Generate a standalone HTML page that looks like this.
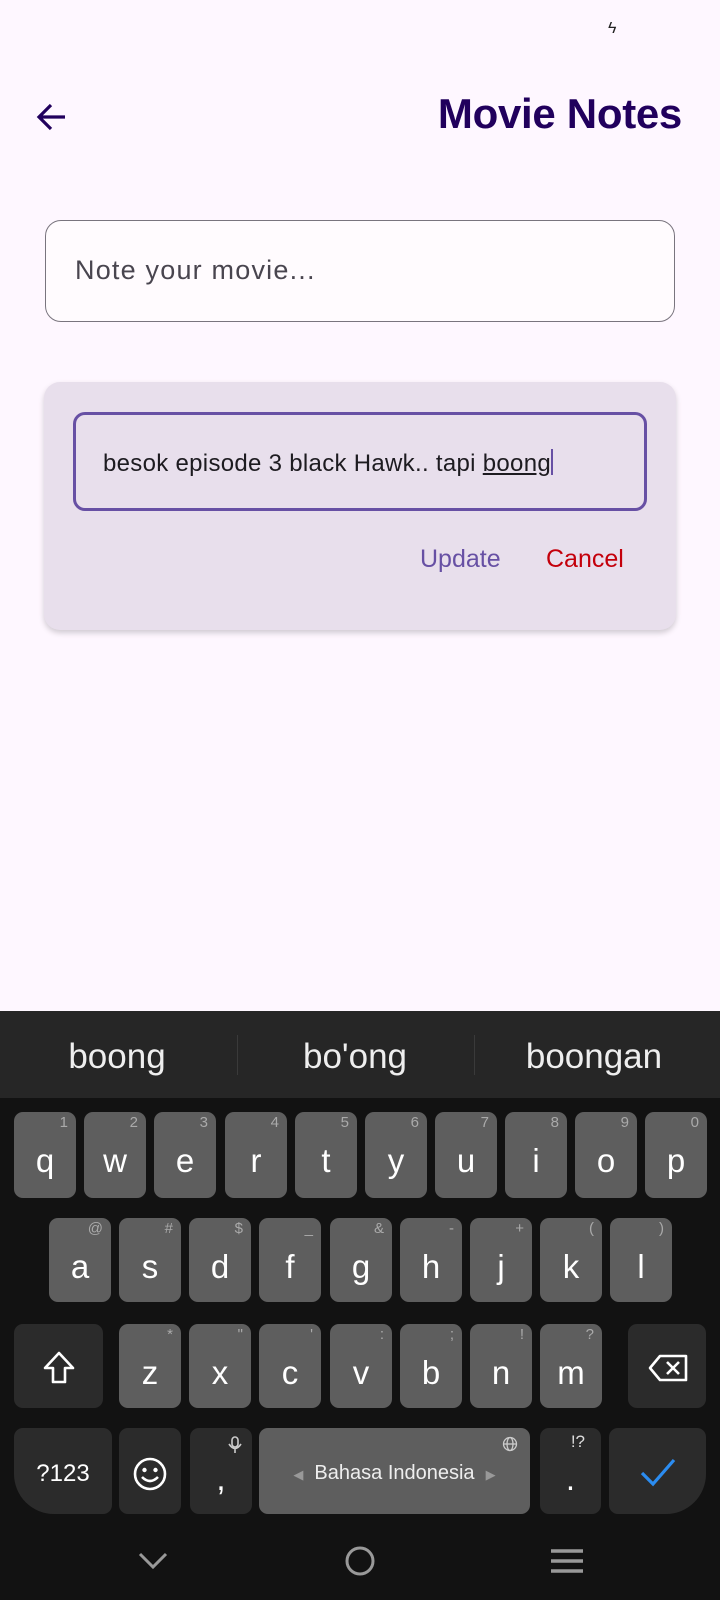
<!DOCTYPE html>
<html><head><meta charset="utf-8"><style>
*{margin:0;padding:0;box-sizing:border-box}
body{width:720px;height:1600px;background:#FEF7FF;font-family:"Liberation Sans",Roboto,sans-serif;position:relative;overflow:hidden}
.a{position:absolute}
.title{right:38px;top:90px;font-size:42px;font-weight:bold;color:#21005D;letter-spacing:-0.3px}
.in1{left:45px;top:220px;width:630px;height:102px;border:1.5px solid #79747E;border-radius:16px;background:#FFFBFE}
.in1 span{position:absolute;left:29px;top:34px;font-size:27px;color:#49454F;letter-spacing:1.2px}
.card{left:44px;top:382px;width:632px;height:248px;background:#E8DFEC;border-radius:16px;box-shadow:0 3px 6px rgba(0,0,0,.18)}
.in2{left:73px;top:412px;width:574px;height:99px;border:3px solid #6750A4;border-radius:12px}
.in2 span{position:absolute;left:27px;top:34px;font-size:24px;color:#1D1B20;letter-spacing:0.3px}
.btn{font-size:25px;top:545px}
.kb{left:0;top:1011px;width:720px;height:589px;background:#121212}
.sug{left:0;top:1011px;width:720px;height:87px;background:#262626}
.sw{font-size:35px;color:#eee;top:1037px;width:200px;text-align:center}
.dv{top:1035px;width:1px;height:40px;background:#3a3a3a}
.k{position:absolute;background:#5E5E5E;border-radius:9px;color:#fff;font-size:33px;text-align:center}
.k .m{position:absolute;left:0;right:0;top:30px}
.k .h{position:absolute;right:8px;top:2px;font-size:15px;color:#aaa}
.d{background:#2B2B2B}
</style></head><body>
<div class="a" style="left:608px;top:20px;color:#222;font-size:16px">ϟ</div>
<svg class="a" style="left:34px;top:101px" width="34" height="32" viewBox="0 0 34 32"><path d="M31 16H5M17 4L5 16l12 12" stroke="#21005D" stroke-width="3.2" fill="none"/></svg>
<div class="a title">Movie Notes</div>
<div class="a in1"><span>Note your movie...</span></div>
<div class="a card"></div>
<div class="a in2"><span>besok episode 3 black Hawk.. tapi <u>boong</u><span style="position:static;display:inline-block;width:2px;height:26px;background:#6750A4;vertical-align:-4px"></span></span></div>
<div class="a btn" style="left:420px;color:#6750A4">Update</div>
<div class="a btn" style="left:546px;color:#C4000B">Cancel</div>
<div class="a kb"></div>
<div class="a sug"></div>
<div class="a sw" style="left:17px">boong</div>
<div class="a sw" style="left:255px">bo'ong</div>
<div class="a sw" style="left:494px">boongan</div>
<div class="a dv" style="left:237px"></div>
<div class="a dv" style="left:474px"></div>
<!-- row1 -->
<div class="k" style="left:14px;top:1112px;width:62px;height:86px"><span class="h">1</span><span class="m">q</span></div>
<div class="k" style="left:84px;top:1112px;width:62px;height:86px"><span class="h">2</span><span class="m">w</span></div>
<div class="k" style="left:154px;top:1112px;width:62px;height:86px"><span class="h">3</span><span class="m">e</span></div>
<div class="k" style="left:225px;top:1112px;width:62px;height:86px"><span class="h">4</span><span class="m">r</span></div>
<div class="k" style="left:295px;top:1112px;width:62px;height:86px"><span class="h">5</span><span class="m">t</span></div>
<div class="k" style="left:365px;top:1112px;width:62px;height:86px"><span class="h">6</span><span class="m">y</span></div>
<div class="k" style="left:435px;top:1112px;width:62px;height:86px"><span class="h">7</span><span class="m">u</span></div>
<div class="k" style="left:505px;top:1112px;width:62px;height:86px"><span class="h">8</span><span class="m">i</span></div>
<div class="k" style="left:575px;top:1112px;width:62px;height:86px"><span class="h">9</span><span class="m">o</span></div>
<div class="k" style="left:645px;top:1112px;width:62px;height:86px"><span class="h">0</span><span class="m">p</span></div>
<!-- row2 -->
<div class="k" style="left:49px;top:1218px;width:62px;height:84px"><span class="h">@</span><span class="m">a</span></div>
<div class="k" style="left:119px;top:1218px;width:62px;height:84px"><span class="h">#</span><span class="m">s</span></div>
<div class="k" style="left:189px;top:1218px;width:62px;height:84px"><span class="h">$</span><span class="m">d</span></div>
<div class="k" style="left:259px;top:1218px;width:62px;height:84px"><span class="h">_</span><span class="m">f</span></div>
<div class="k" style="left:330px;top:1218px;width:62px;height:84px"><span class="h">&amp;</span><span class="m">g</span></div>
<div class="k" style="left:400px;top:1218px;width:62px;height:84px"><span class="h">-</span><span class="m">h</span></div>
<div class="k" style="left:470px;top:1218px;width:62px;height:84px"><span class="h">+</span><span class="m">j</span></div>
<div class="k" style="left:540px;top:1218px;width:62px;height:84px"><span class="h">(</span><span class="m">k</span></div>
<div class="k" style="left:610px;top:1218px;width:62px;height:84px"><span class="h">)</span><span class="m">l</span></div>
<!-- row3 -->
<div class="k d" style="left:14px;top:1324px;width:89px;height:84px"><svg style="position:absolute;left:28px;top:26px" width="34" height="36" viewBox="0 0 34 36"><path d="M17 3L3 18h8v14h12V18h8z" stroke="#fff" stroke-width="2.6" fill="none" stroke-linejoin="round"/></svg></div>
<div class="k" style="left:119px;top:1324px;width:62px;height:84px"><span class="h">*</span><span class="m">z</span></div>
<div class="k" style="left:189px;top:1324px;width:62px;height:84px"><span class="h">"</span><span class="m">x</span></div>
<div class="k" style="left:259px;top:1324px;width:62px;height:84px"><span class="h">'</span><span class="m">c</span></div>
<div class="k" style="left:330px;top:1324px;width:62px;height:84px"><span class="h">:</span><span class="m">v</span></div>
<div class="k" style="left:400px;top:1324px;width:62px;height:84px"><span class="h">;</span><span class="m">b</span></div>
<div class="k" style="left:470px;top:1324px;width:62px;height:84px"><span class="h">!</span><span class="m">n</span></div>
<div class="k" style="left:540px;top:1324px;width:62px;height:84px"><span class="h">?</span><span class="m">m</span></div>
<div class="k d" style="left:628px;top:1324px;width:78px;height:84px"><svg style="position:absolute;left:20px;top:30px" width="40" height="28" viewBox="0 0 40 28"><path d="M12 2h26v24H12L2 14z" stroke="#fff" stroke-width="2.6" fill="none" stroke-linejoin="round"/><path d="M19 8l12 12M31 8L19 20" stroke="#fff" stroke-width="2.6"/></svg></div>
<!-- row4 -->
<div class="k d" style="left:14px;top:1428px;width:98px;height:86px;border-radius:9px 9px 9px 40px"><span class="m" style="font-size:24px;top:32px">?123</span></div>
<div class="k d" style="left:119px;top:1428px;width:62px;height:86px"><svg style="position:absolute;left:13px;top:28px" width="36" height="36" viewBox="0 0 36 36"><circle cx="18" cy="18" r="15" stroke="#fff" stroke-width="2.6" fill="none"/><circle cx="12.5" cy="14" r="2.2" fill="#fff"/><circle cx="23.5" cy="14" r="2.2" fill="#fff"/><path d="M10 21q8 8 16 0" stroke="#fff" stroke-width="2.6" fill="none"/></svg></div>
<div class="k d" style="left:190px;top:1428px;width:62px;height:86px"><span class="m" style="top:32px">,</span><svg style="position:absolute;right:10px;top:8px" width="14" height="18" viewBox="0 0 14 18"><rect x="4" y="1" width="6" height="10" rx="3" stroke="#ccc" stroke-width="1.6" fill="none"/><path d="M1 8q6 9 12 0M7 13v4" stroke="#ccc" stroke-width="1.6" fill="none"/></svg></div>
<div class="k" style="left:259px;top:1428px;width:271px;height:86px"><span class="m" style="font-size:20px;top:34px;color:#eee"><span style="color:#999;font-size:13px">◀</span>&nbsp; Bahasa Indonesia &nbsp;<span style="color:#999;font-size:13px">▶</span></span><svg style="position:absolute;right:12px;top:8px" width="16" height="16" viewBox="0 0 16 16"><circle cx="8" cy="8" r="6.5" stroke="#ccc" stroke-width="1.3" fill="none"/><ellipse cx="8" cy="8" rx="3" ry="6.5" stroke="#ccc" stroke-width="1.3" fill="none"/><path d="M1.5 8h13" stroke="#ccc" stroke-width="1.3"/></svg></div>
<div class="k d" style="left:540px;top:1428px;width:61px;height:86px"><span class="h" style="color:#ddd;font-size:17px;right:16px;top:4px">!?</span><span class="m" style="top:32px">.</span></div>
<div class="k d" style="left:609px;top:1428px;width:97px;height:86px;border-radius:9px 9px 40px 9px"><svg style="position:absolute;left:30px;top:28px" width="38" height="32" viewBox="0 0 38 32"><path d="M3 17l11 11L35 4" stroke="#2B8CF0" stroke-width="3.2" fill="none"/></svg></div>
<!-- nav -->
<svg class="a" style="left:137px;top:1551px" width="32" height="20" viewBox="0 0 32 20"><path d="M3 3l13 13L29 3" stroke="#999" stroke-width="3" fill="none"/></svg>
<svg class="a" style="left:344px;top:1545px" width="32" height="32" viewBox="0 0 32 32"><circle cx="16" cy="16" r="13" stroke="#999" stroke-width="3" fill="none"/></svg>
<svg class="a" style="left:550px;top:1548px" width="34" height="26" viewBox="0 0 34 26"><path d="M1 3h32M1 13h32M1 23h32" stroke="#999" stroke-width="3.4"/></svg>
</body></html>
